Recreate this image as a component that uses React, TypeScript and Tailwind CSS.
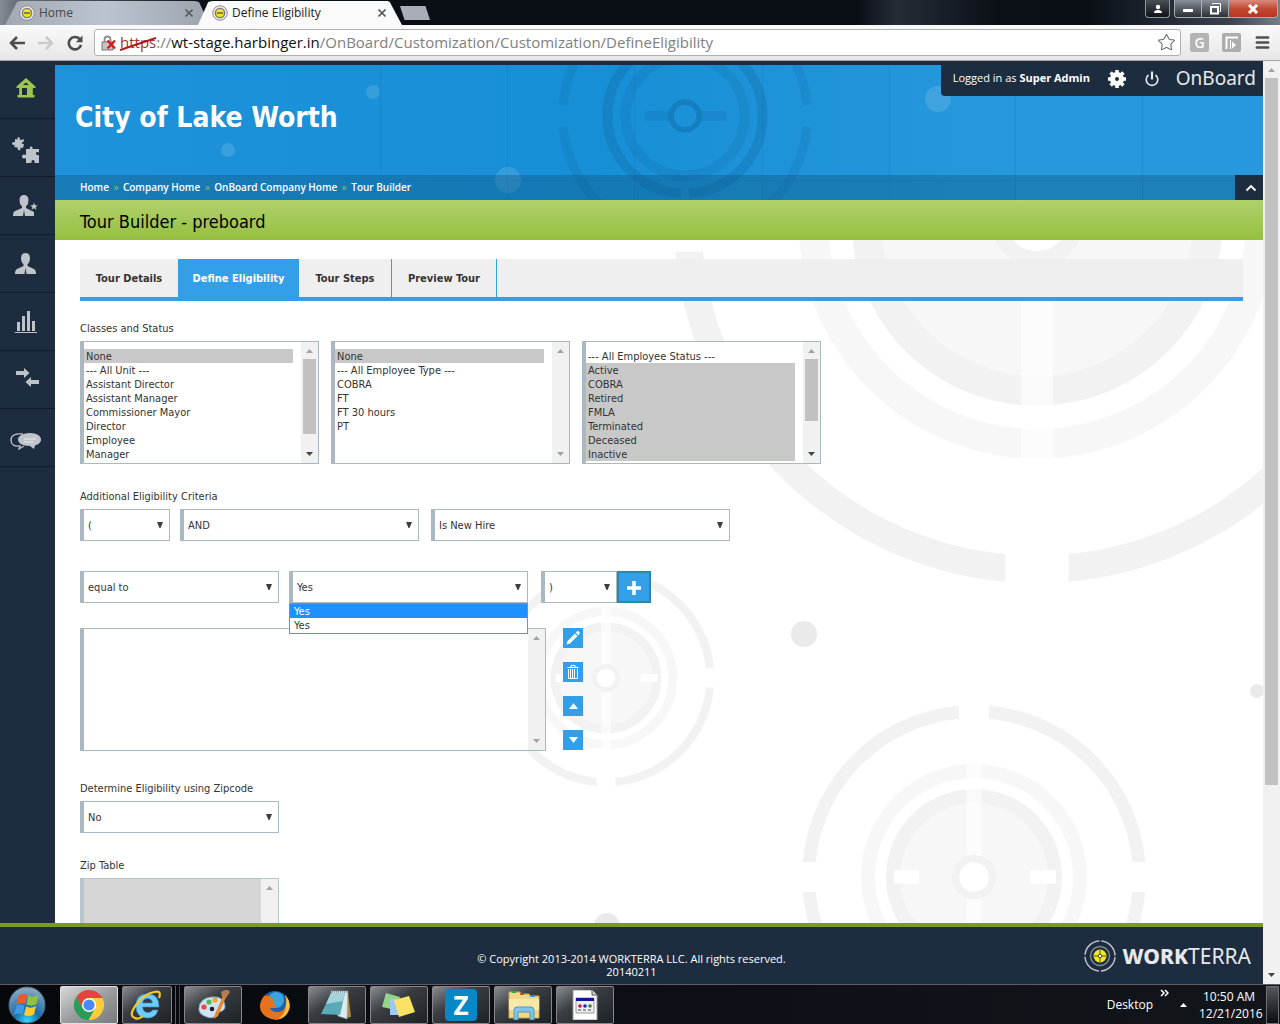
import { ReactNode } from 'react';
import { Menu, Star } from 'lucide-react';

const units = [
  'None',
  '--- All Unit ---',
  'Assistant Director',
  'Assistant Manager',
  'Commissioner Mayor',
  'Director',
  'Employee',
  'Manager',
];
const employeeTypes = ['None', '--- All Employee Type ---', 'COBRA', 'FT', 'FT 30 hours', 'PT'];
const statuses = [
  '--- All Employee Status ---',
  'Active',
  'COBRA',
  'Retired',
  'FMLA',
  'Terminated',
  'Deceased',
  'Inactive',
];

const breadcrumbs = ['Home', 'Company Home', 'OnBoard Company Home', 'Tour Builder'];

function Favicon() {
  return (
    <svg className="h-4 w-4 shrink-0" viewBox="0 0 16 16">
      <circle cx="8" cy="8" r="7.3" fill="#e8e8e8" stroke="#8d8d95" />
      <circle cx="8" cy="8" r="4.6" fill="#f4e21c" stroke="#77777c" strokeWidth="1.4" />
      <path d="M5 8h6" stroke="#5c5c70" strokeWidth="1.6" />
    </svg>
  );
}

function TabClose() {
  return (
    <button aria-label="Close tab" className="flex h-4 w-4 shrink-0 items-center justify-center">
      <svg className="h-2 w-2" viewBox="0 0 8 8" stroke="#5a5d60" strokeWidth="1.6">
        <path d="M.5.5l7 7M7.5.5l-7 7" />
      </svg>
    </button>
  );
}

function TabStrip() {
  return (
    <div className="flex h-[25px] shrink-0 items-start bg-[linear-gradient(90deg,#858b94_0,#6b727c_14px,#0a0f16_210px,#0a0f16_67%,#262c35_70%,#0b1017_78%,#0a0f16_85%,#1a2029_89%,#3a424c_96%,#76808a_100%)] font-['Open_Sans',sans-serif] text-xs">
      <div className="ml-[5px] flex h-full w-[200px] items-center gap-1 bg-gradient-to-r from-[#a3a8b0] via-[#bac4d0] to-[#9da4ae] pr-2 pl-[14px] text-[#45484c] [clip-path:polygon(0_100%,6%_8%,8%_4%,95%_4%,97%_8%,100%_60%,100%_100%)]">
        <Favicon />
        <span className="flex-1">Home</span>
        <TabClose />
      </div>
      <div className="-ml-[7px] flex h-full w-[204px] items-center gap-1 bg-[#fafafa] pr-[12px] pl-[14px] text-[#222] [clip-path:polygon(0_100%,5%_8%,7%_4%,93%_4%,94%_8%,100%_100%)]">
        <Favicon />
        <span className="flex-1">Define Eligibility</span>
        <TabClose />
      </div>
      <button
        aria-label="New tab"
        className="-ml-[2px] mt-[6px] h-[14px] w-[30px] bg-[#a9adb6] [clip-path:polygon(0_0,85%_0,100%_100%,15%_100%)]"
      />
      <div className="ml-auto flex gap-1 pr-[2px]">
        <button
          aria-label="Profile"
          className="flex h-[18px] w-[25px] items-center justify-center rounded-b border border-t-0 border-[#8f949b] bg-gradient-to-b from-[#4b5056] to-[#101418]"
        >
          <svg className="h-3 w-3" viewBox="0 0 12 12" fill="#fff">
            <circle cx="6" cy="4" r="2.2" />
            <path d="M2 10q0-3 4-3t4 3z" />
          </svg>
        </button>
        <div className="flex h-[18px] overflow-hidden rounded-b border border-t-0 border-[#a9adb3]">
          <button
            aria-label="Minimize"
            className="flex w-[27px] items-center justify-center border-r border-[#a9adb3] bg-gradient-to-b from-[#8a9097] to-[#2c3138]"
          >
            <span className="mt-1 h-[3px] w-[10px] bg-white" />
          </button>
          <button
            aria-label="Restore"
            className="flex w-[27px] items-center justify-center border-r border-[#a9adb3] bg-gradient-to-b from-[#8a9097] to-[#2c3138]"
          >
            <svg className="h-3 w-3" viewBox="0 0 12 12" fill="none" stroke="#fff">
              <path d="M3.500 1.500v-1h8v8h-1" />
              <path d="M2 4h7v6.500H2z" strokeWidth="2" />
            </svg>
          </button>
          <button
            aria-label="Close"
            className="flex w-[48px] items-center justify-center bg-gradient-to-b from-[#d98a7c] via-[#c24a34] to-[#b8351d]"
          >
            <svg className="h-[10px] w-3" viewBox="0 0 12 10" stroke="#fff" strokeWidth="3">
              <path d="M2 1l8 8M10 1L2 9" />
            </svg>
          </button>
        </div>
      </div>
    </div>
  );
}

function AddressBar() {
  return (
    <div className="flex h-9 shrink-0 items-center border-b border-[#a5a5a5] bg-gradient-to-b from-[#fafafa] to-[#e6e6e6] pr-[9px] pl-[9px]">
      <button aria-label="Back" className="mr-[13px]">
        <svg className="h-4 w-4" viewBox="0 0 16 16" fill="none" stroke="#4c4c4c" strokeWidth="2.6">
          <path d="M16 8H2.5M8 2L2 8l6 6" />
        </svg>
      </button>
      <button aria-label="Forward" className="mr-[13px]">
        <svg className="h-4 w-4" viewBox="0 0 16 16" fill="none" stroke="#cbcbcb" strokeWidth="2.6">
          <path d="M0 8h13.5M8 2l6 6-6 6" />
        </svg>
      </button>
      <button aria-label="Reload" className="mr-[11px]">
        <svg className="h-4 w-4" viewBox="0 0 16 16">
          <path d="M12.6 4A6.2 6.2 0 1 0 14 9.8" fill="none" stroke="#4c4c4c" strokeWidth="2.6" />
          <path d="M15.5.5v6.7H8.8z" fill="#4c4c4c" />
        </svg>
      </button>
      <div className="flex h-[27px] min-w-0 flex-1 items-center rounded-[3px] border border-[#b0b0b0] bg-white pr-[4px] pl-[6px]">
        <svg className="h-4 w-4 shrink-0" viewBox="0 0 16 16">
          <path d="M3.5 8V4.5a3 3 0 0 1 6 0V8" fill="none" stroke="#8c8c8c" strokeWidth="1.8" />
          <path d="M1 7h11v8H1z" fill="#c4c4c4" stroke="#777" />
          <path d="M6.500 5.500l7.500 8M14 5.500l-7.500 8" stroke="#d8171b" strokeWidth="2.2" />
        </svg>
        <div
          role="textbox"
          aria-label="Address"
          className="ml-[3px] flex-1 overflow-hidden font-['Open_Sans',sans-serif] text-[15px] whitespace-nowrap text-[#808080]"
        >
          <span className="relative text-[#a5352f]">
            https
            <svg className="absolute top-1 left-0 h-4 w-9" viewBox="0 0 36 16">
              <path d="M0 14L36 2" stroke="#b3141a" strokeWidth="2" />
            </svg>
          </span>
          ://<span className="text-[#111]">wt-stage.harbinger.in</span>
          /OnBoard/Customization/Customization/DefineEligibility
        </div>
        <Star size={19} strokeWidth={1.3} className="text-[#666]" />
      </div>
      <button
        aria-label="Translate extension"
        className="ml-[9px] h-[19px] w-[19px] rounded-xs bg-[#b4b4b4] font-['Open_Sans',sans-serif] text-sm leading-[19px] font-semibold text-white"
      >
        G
      </button>
      <button
        aria-label="Player extension"
        className="ml-[13px] flex h-[19px] w-[19px] items-center justify-center rounded-xs bg-[#adadad]"
      >
        <svg className="h-[15px] w-[15px]" viewBox="0 0 15 15">
          <path d="M2.500 14V2.500H14" fill="none" stroke="#fff" strokeWidth="2" />
          <path d="M6.500 5v9" stroke="#fff" />
          <path d="M8 6.500l4 3.500-4 3.500z" fill="#fff" />
        </svg>
      </button>
      <button aria-label="Menu" className="ml-[13px]">
        <Menu size={17} strokeWidth={3.4} className="text-[#505050]" />
      </button>
    </div>
  );
}

const navItems: { label: string; icon: ReactNode }[] = [
  {
    label: 'Home',
    icon: (
      <svg className="mb-1 h-[20px] w-[20px]" viewBox="0 0 20 20" fill="#9fc54d">
        <path
          fillRule="evenodd"
          d="M10 0L.5 8.500V10h2.700v7H1.500v2.500h17V17h-1.700v-7h2.700V8.500zM10 4.500l3 2.500H7zM6 10h5v7H6z"
        />
      </svg>
    ),
  },
  {
    label: 'Modules',
    icon: (
      <svg className="mt-1 h-[26px] w-[28px]" viewBox="0 0 28 26" fill="#bfc4ca">
        <path d="M3 2l2.500.5Q5 0 6.500 0T8 3l4-.8-.5 2.800Q9.500 5 9.500 6t2.500 1l-1 4-2.500-.5q.5 2.500-1 2.800-2 .2-2-2.800L2 10l1-2Q0 8.500 0 6.500T3 5z" />
        <path d="M14 12h4q-1-2.500 1-2.500T20.500 12H27v3.500q-3-1.200-3 1t3 1.500V26h-4.500q.5-3-1.500-3t-1.500 3H14v-5q-4 1.500-4-1.500t4-1.500z" />
      </svg>
    ),
  },
  {
    label: 'New hires',
    icon: (
      <svg className="h-[21px] w-[25px]" viewBox="0 0 25 21" fill="#bfc4ca">
        <path d="M11 0q4.500 0 4.500 5.500 0 4-2.500 6v1.500l8 4V21H12l-1-6-1 6H0q0-4 2-5l7-3v-1.500q-2.500-2-2.500-6Q6.500 0 11 0z" />
        <path d="M21 7l1.300 3 3 .2-2.300 2 .8 3L21 13.600 18.200 15.200l.8-3-2.300-2 3-.2z" stroke="#1d2d3f" strokeWidth=".6" />
      </svg>
    ),
  },
  {
    label: 'Employees',
    icon: (
      <svg className="h-[21px] w-[21px]" viewBox="0 0 21 21" fill="#bfc4ca">
        <path d="M10.500 0Q15 0 15 5.500q0 4-2.500 6v1.500l6.500 3q2 1 2 5h-9.500l-1-6-1 6H0q0-4 2-5l6.500-3v-1.500Q6 9.500 6 5.500 6 0 10.500 0z" />
      </svg>
    ),
  },
  {
    label: 'Reports',
    icon: (
      <svg className="h-[22px] w-[22px]" viewBox="0 0 22 22" fill="#bfc4ca">
        <path d="M2 11h3v9H2zM7 5h3v15H7zM12 0h3v20h-3zM17 10h3v10h-3zM0 21h22v1H0z" />
      </svg>
    ),
  },
  {
    label: 'Transfers',
    icon: (
      <svg className="ml-1 mb-1 h-[19px] w-[23px]" viewBox="0 0 23 19" fill="#bfc4ca">
        <path d="M0 3h8V0l5.500 5L8 10V7H0zM23 12h-8V9l-5.500 5 5.500 5v-3h8z" />
      </svg>
    ),
  },
  {
    label: 'Messages',
    icon: (
      <svg className="mt-2 h-[17px] w-[31px]" viewBox="0 0 31 17">
        <path d="M13 1Q1 0 1 7t9 6l-1 3 5-3" fill="none" stroke="#bfc4ca" strokeWidth="1.300" />
        <path d="M20 0c7 0 11 3 11 6.500 0 3-2.500 5-6 6l-1 3.500-4-3q-12 0-12-6.500C8 3 13 0 20 0z" fill="#bfc4ca" />
        <path d="M14 6h12M14 9h9" stroke="#e9ebed" />
      </svg>
    ),
  },
];

function Sidebar() {
  return (
    <nav className="w-[55px] shrink-0 bg-[#1d2d3f]">
      {navItems.map((item) => (
        <a
          key={item.label}
          href="#"
          aria-label={item.label}
          className="flex h-[58px] items-center justify-center border-b border-[#111c2b] pr-1"
        >
          {item.icon}
        </a>
      ))}
    </nav>
  );
}

// Crosshair watermark, drawn around its own centre
function Target({ x, y, scale }: { x: number; y: number; scale: number }) {
  return (
    <g transform={`translate(${x} ${y}) scale(${scale})`}>
      <circle r="165.500" fill="none" stroke="#f2f2f2" strokeWidth="13" />
      <path d="M-15-175h30v350h-30zM-175-15h350v30h-350z" fill="#fff" />
      <circle r="106" fill="none" stroke="#f7f7f7" strokeWidth="14" />
      <circle r="88" fill="#f2f2f2" />
      <circle r="74" fill="#f7f7f7" />
      <path d="M-7.500-113h15v226h-15z" fill="#fff" fillOpacity=".6" />
      <path d="M-80-6.500h25v13h-25zM56-6.500h26v13H56z" fill="#fff" />
      <circle r="18.500" fill="#fff" stroke="#f2f2f2" strokeWidth="7.500" />
    </g>
  );
}

function Watermark() {
  return (
    <svg className="pointer-events-none absolute inset-0 h-full w-full" aria-hidden="true">
      <Target x={982} y={-20} scale={2.11} />
      <Target x={919} y={637} scale={1} />
      <Target x={551} y={438} scale={0.63} />
      <g fill="#eaeaea">
        <circle cx="749" cy="394" r="13" />
        <circle cx="552" cy="686" r="13" />
        <circle cx="1202" cy="451" r="7" />
      </g>
    </svg>
  );
}

function HeaderArt() {
  return (
    <svg className="absolute inset-0 h-full w-full" aria-hidden="true">
      <g transform="translate(630 51)" fill="none" stroke="#0b5f96" strokeOpacity=".25">
        <path d="M-122-11A122.500 122.500 0 0 1 122-11M-122 11A122.500 122.500 0 0 0 122 11" strokeWidth="9" strokeOpacity=".16" />
        <path d="M-4-77.400A77.500 77.500 0 0 0-4 77.400M4-77.400A77.500 77.500 0 0 1 4 77.400" strokeWidth="10" />
        <circle r="59.500" strokeWidth="10" strokeOpacity=".15" />
        <path d="M-40 0h24M16 0h26" strokeWidth="10" strokeOpacity=".16" />
        <circle r="14" strokeWidth="5.500" strokeOpacity=".36" />
      </g>
      <g stroke="#0a6cab" strokeOpacity=".25">
        <path d="M325.500 0v135M452.500 0v135M579.500 0v135M707.500 0v135M834.500 0v135M960.500 0v135M1087.500 0v135M326 115.500h900" />
      </g>
      <g fill="#fff" fillOpacity=".13">
        <circle cx="318" cy="27" r="7" />
        <circle cx="173" cy="85" r="7" />
        <circle cx="453" cy="115" r="13" />
        <circle cx="883" cy="34" r="13" />
      </g>
    </svg>
  );
}

function Header() {
  return (
    <header className="relative bg-[#1d2d3f] pt-1">
      <div className="relative bg-gradient-to-r from-[#1e92da] via-[#178fd6] via-45% to-[#2798dc] to-80%">
        <HeaderArt />
        <h1 className="relative flex h-[110px] items-center pb-1 pl-5 text-[28px] font-bold text-white">
          City of Lake Worth
        </h1>
        <div className="relative flex h-[25px] items-center bg-[#0f5078]/35 pl-[25px] text-[10px]">
          <nav className="flex flex-1 font-['Open_Sans',sans-serif] font-semibold text-white">
            {breadcrumbs.map((crumb, i) => (
              <span key={crumb} className="flex">
                <a href="#">{crumb}</a>
                {i < breadcrumbs.length - 1 && (
                  <span className="w-[14px] text-center font-normal text-[#8cc152]">»</span>
                )}
              </span>
            ))}
          </nav>
          <button aria-label="Collapse header" className="flex h-[25px] w-7 items-center justify-center bg-[#1d2d3f]">
            <svg className="ml-1 h-2 w-3" viewBox="0 0 12 8" fill="none" stroke="#fff" strokeWidth="1.800">
              <path d="M1.500 6.500L6 2l4.500 4.500" />
            </svg>
          </button>
        </div>
      </div>
      <div className="absolute top-0 right-0 flex h-[35px] items-center rounded-bl bg-[#1d2d3f] pr-[7px] pl-3 text-white">
        <span className="w-[135px] font-['Open_Sans',sans-serif] text-[11px] whitespace-nowrap">
          Logged in as <b>Super Admin</b>
        </span>
        <button aria-label="Settings" className="ml-5">
          <svg className="h-[18px] w-[18px]" viewBox="-9 -9 18 18">
            <circle r="4.500" fill="none" stroke="#fff" strokeWidth="5" />
            <path
              d="M0-9v4M0 9V5M-9 0h4M9 0H5M-6.400-6.400l3 3M6.400 6.400l-3-3M-6.400 6.400l3-3M6.400-6.400l-3 3"
              stroke="#fff"
              strokeWidth="3.600"
            />
          </svg>
        </button>
        <button aria-label="Log out" className="ml-[18px]">
          <svg className="h-4 w-4" viewBox="0 0 16 16" fill="none" stroke="#e6e9ec">
            <path d="M4.500 4a5.800 5.800 0 1 0 7 0" strokeWidth="1.600" />
            <path d="M8 .5v8" strokeWidth="2.200" />
          </svg>
        </button>
        <span className="ml-4 font-['Noto_Sans',sans-serif] text-[19px] text-[#e6e9ec]">OnBoard</span>
      </div>
    </header>
  );
}

function ScrollArrow({ down = false, dim = false }: { down?: boolean; dim?: boolean }) {
  return (
    <svg className={`h-1 w-[7px] shrink-0 ${dim ? 'text-[#a3a3a3]' : 'text-[#444]'}`} viewBox="0 0 7 4" fill="currentColor">
      <path d={down ? 'M0 0h7L3.500 4z' : 'M0 4h7L3.500 0z'} />
    </svg>
  );
}

function ListScrollbar({ thumb = '' }: { thumb?: string }) {
  return (
    <div className="flex w-[17px] shrink-0 flex-col items-center bg-[#f1f1f1] pt-[7px] pb-[7px]">
      <ScrollArrow dim />
      {thumb && <div className={`mt-[6px] w-[13px] bg-[#c1c1c1] ${thumb}`} />}
      <div className="flex-1" />
      <ScrollArrow down dim={!thumb} />
    </div>
  );
}

interface ListBoxProps {
  label: string;
  options: string[];
  selected: string[];
  thumb?: string;
}

function ListBox({ label, options, selected, thumb }: ListBoxProps) {
  return (
    <div className="flex h-[123px] w-[239px] border border-l-4 border-[#aab8c2] bg-white">
      <select
        multiple
        aria-label={label}
        defaultValue={selected}
        className="mr-2 h-full min-w-0 flex-1 appearance-none overflow-hidden bg-white pt-[7px] text-[#333] outline-none"
      >
        {options.map((option) => (
          <option key={option} className="h-[14px] min-h-0 px-[2px] pt-px pb-0 leading-[14px] checked:bg-[#c8c8c8] checked:text-[#333]">
            {option}
          </option>
        ))}
      </select>
      <ListScrollbar thumb={thumb} />
    </div>
  );
}

interface DropDownProps {
  id?: string;
  label?: string;
  value: string;
  width: string;
}

function DropDown({ id, label, value, width }: DropDownProps) {
  return (
    <div className={`relative h-8 ${width}`}>
      <select
        id={id}
        aria-label={label}
        defaultValue={value}
        className="h-full w-full appearance-none border border-l-4 border-[#aab8c2] bg-white pt-[2px] pl-1 text-[#333] outline-none"
      >
        <option>{value}</option>
      </select>
      <svg className="pointer-events-none absolute top-[13px] right-[7px] h-[6px] w-[6px]" viewBox="0 0 6 6" fill="#3d3d3d">
        <path d="M0 0h6L3.500 6h-1z" />
      </svg>
    </div>
  );
}

function Tabs() {
  return (
    <nav className="flex h-[42px] border-b-4 border-[#329fe8] bg-[#efefef] text-[11px] leading-[39px] font-bold text-[#333]">
      <a href="#" className="w-[98px] text-center">Tour Details</a>
      <a href="#" className="w-[121px] bg-[#329fe8] text-center text-white">Define Eligibility</a>
      <a href="#" className="w-[93px] border-r border-[#329fe8] text-center">Tour Steps</a>
      <a href="#" className="w-[105px] border-r border-[#329fe8] text-center">Preview Tour</a>
    </nav>
  );
}

function SquareButton({ label, children }: { label: string; children: ReactNode }) {
  return (
    <button type="button" aria-label={label} className="flex h-5 w-5 items-center justify-center bg-[#329fe8]">
      {children}
    </button>
  );
}

function EligibilityForm() {
  return (
    <form className="relative px-[25px] pt-[19px] text-[11px] leading-4 text-[#333]">
      <div className="-mr-[5px]">
        <Tabs />
      </div>

      <p className="mt-5 mb-1">Classes and Status</p>
      <div className="flex gap-3">
        <ListBox label="Unit" options={units} selected={['None']} thumb="h-[75px]" />
        <ListBox label="Employee type" options={employeeTypes} selected={['None']} />
        <ListBox label="Employee status" options={statuses} selected={statuses.slice(1)} thumb="h-[62px]" />
      </div>

      <p className="mt-[25px] mb-1">Additional Eligibility Criteria</p>
      <div className="flex">
        <DropDown label="Opening bracket" value="(" width="w-[90px] mr-[10px]" />
        <DropDown label="Operator" value="AND" width="w-[239px] mr-3" />
        <DropDown label="Field" value="Is New Hire" width="w-[299px]" />
      </div>
      <div className="mt-[30px] flex">
        <DropDown label="Comparison" value="equal to" width="w-[199px] mr-[10px]" />
        <div className="relative mr-[13px]">
          <DropDown label="Value" value="Yes" width="w-[239px]" />
          <ul className="absolute top-8 left-0 z-10 w-full border border-[#6f8fc9] bg-white leading-[15px]">
            <li className="h-[14px] bg-[#1e90ff] pl-1 text-white">Yes</li>
            <li className="h-[15px] pl-1">Yes</li>
          </ul>
        </div>
        <DropDown label="Closing bracket" value=")" width="w-[76px]" />
        <button
          type="button"
          aria-label="Add criteria"
          className="flex h-8 w-[34px] items-center justify-center border-2 border-[#2c86ad] bg-[#329fe8]"
        >
          <svg className="mt-[2px] h-[14px] w-[14px]" viewBox="0 0 14 14" stroke="#fff" strokeWidth="3.500">
            <path d="M7 0v14M0 7h14" />
          </svg>
        </button>
      </div>

      <div className="mt-[25px] flex gap-[17px]">
        <div className="flex h-[123px] w-[466px] border border-l-4 border-[#aab8c2] bg-white">
          <select multiple aria-label="Criteria" className="h-full flex-1 appearance-none overflow-hidden outline-none" />
          <ListScrollbar />
        </div>
        <div className="flex flex-col gap-[14px]">
          <SquareButton label="Edit">
            <svg className="h-[14px] w-[14px]" viewBox="0 0 14 14" fill="#fff">
              <path d="M.500 13.500l1-3.500L9 2.500 11.500 5 4 12.500zM9.800 1.700l1.400-1.400q.8-.6 1.900.4t.4 2L12.200 4.200z" />
            </svg>
          </SquareButton>
          <SquareButton label="Delete">
            <svg className="h-[14px] w-[12px]" viewBox="0 0 12 14" fill="none" stroke="#fff">
              <path d="M.5 2.500h11M4 2V.5h4V2M1.500 4v9.500h9V4M3.500 4v9M5.500 4v9M7.500 4v9" />
            </svg>
          </SquareButton>
          <SquareButton label="Move up">
            <svg className="h-[6px] w-[9px]" viewBox="0 0 9 6" fill="#fff">
              <path d="M0 6h9L4.500 0z" />
            </svg>
          </SquareButton>
          <SquareButton label="Move down">
            <svg className="h-[6px] w-[9px]" viewBox="0 0 9 6" fill="#fff">
              <path d="M0 0h9L4.500 6z" />
            </svg>
          </SquareButton>
        </div>
      </div>

      <label htmlFor="zipcode" className="mt-[30px] mb-1 block">
        Determine Eligibility using Zipcode
      </label>
      <DropDown id="zipcode" value="No" width="w-[199px]" />

      <label htmlFor="zip-table" className="mt-[25px] mb-1 block">
        Zip Table
      </label>
      <div className="flex h-[123px] w-[199px] border border-l-4 border-[#bac6ce]">
        <select
          id="zip-table"
          multiple
          disabled
          className="h-full min-w-0 flex-1 appearance-none overflow-hidden bg-[#d6d6d6] outline-none"
        />
        <ListScrollbar />
      </div>
    </form>
  );
}

function Footer() {
  return (
    <footer className="grid h-[61px] shrink-0 grid-cols-[1fr_auto_1fr] items-center border-t-4 border-[#7a992c] bg-[#1d2d3f] text-white">
      <div />
      <p className="pt-[18px] text-center font-['Open_Sans',sans-serif] text-[11px] leading-[13px]">
        © Copyright 2013-2014 WORKTERRA LLC. All rights reserved.
        <br />
        20140211
      </p>
      <div className="flex items-center justify-end gap-[6px] pr-3">
        <svg className="h-8 w-8" viewBox="-16 -16 32 32" fill="none">
          <circle r="15" stroke="#b9bec5" strokeWidth="1.500" strokeDasharray="21.560 2" strokeDashoffset="-1" />
          <circle r="9.500" stroke="#7d8792" strokeWidth="1.500" />
          <circle r="6.500" fill="#f6e81e" />
          <path d="M-6 0H6M0-6V6" stroke="#55502a" />
          <circle r="1.800" fill="#fff" stroke="#55502a" />
        </svg>
        <span className="pt-[2px] font-['Noto_Sans',sans-serif] text-[21px] text-[#e6e9ec]">
          <b className="font-extrabold">WORK</b>TERRA
        </span>
      </div>
    </footer>
  );
}

function PageScrollbar() {
  return (
    <div className="flex w-[17px] shrink-0 flex-col items-center bg-[#f1f1f1] pt-[7px] pb-[7px]">
      <ScrollArrow dim />
      <div className="mt-[6px] w-[13px] flex-[705] bg-[#c1c1c1]" />
      <div className="flex-[187]" />
      <ScrollArrow down />
    </div>
  );
}

const taskIcon = 'h-[30px] w-[34px]';

function TaskButton({ label, active, children }: { label: string; active?: boolean; children: ReactNode }) {
  return (
    <button
      aria-label={label}
      className={`flex h-[38px] w-[58px] items-center justify-center rounded-xs border ${
        active
          ? 'border-[#e2e2e2] bg-gradient-to-br from-[#d9d9d9] via-[#9b9d9f] to-[#77797c]'
          : 'border-[#85878b] bg-gradient-to-br from-[#8b8d90] via-[#3a3e43] via-40% to-[#1d2227]'
      }`}
    >
      {children}
    </button>
  );
}

function Taskbar() {
  return (
    <div className="flex h-10 shrink-0 items-center border-t border-[#5d5f68] bg-gradient-to-r from-[#06080c] via-[#0c1016] to-[#12161b] font-['Open_Sans',sans-serif] text-xs text-white">
      <button aria-label="Start" className="mr-[14px] ml-2">
        <svg className="h-[38px] w-[38px]" viewBox="-19 -19 38 38">
          <defs>
            <radialGradient id="orb" cy=".95" r=".9">
              <stop offset="0" stopColor="#2fd8ff" />
              <stop offset=".4" stopColor="#176cab" />
              <stop offset="1" stopColor="#8ba7bf" />
            </radialGradient>
          </defs>
          <circle r="18" fill="url(#orb)" stroke="#4b6a82" />
          <path d="M-8.500-9q4-3.500 8.500-1l-2 9q-4-2.500-8.500 1z" fill="#ec5a2b" />
          <path d="M1.500-9.500q4.500 2.500 10-.5L9.500-1q-5 3-10 .5z" fill="#8cc63e" />
          <path d="M-11 1.500q4-3 8.500-.5l-2 8.500q-4-2.500-8.500 1z" fill="#3f9ae0" />
          <path d="M-1 1.500q4.500 2.500 10-.5L7 9.500q-5 3-10 .5z" fill="#fdc92b" />
        </svg>
      </button>
      <div className="flex gap-1">
        <TaskButton label="Google Chrome" active>
          <svg className={taskIcon} viewBox="-17 -15 34 30">
            <circle r="8" fill="#fff" />
            <path d="M0-7H13.270A15 15 0 0 0-12.700-8L-6.060 3.500A7 7 0 0 1 0-7z" fill="#e2463a" />
            <path d="M0-7H13.270A15 15 0 0 0-12.700-8L-6.060 3.500A7 7 0 0 1 0-7z" fill="#fccd38" transform="rotate(120)" />
            <path d="M0-7H13.270A15 15 0 0 0-12.700-8L-6.060 3.500A7 7 0 0 1 0-7z" fill="#2b9c56" transform="rotate(240)" />
            <circle r="5.600" fill="#4a8af4" />
          </svg>
        </TaskButton>
        <div className="flex w-[58px] gap-[2px] [&>button]:w-[50px]">
          <TaskButton label="Internet Explorer">
            <svg className={taskIcon} viewBox="0 0 34 30">
              <path
                d="M29 17H12.500q.5 5.500 5.500 5.500 3.500 0 4.500-2.500H28q-2 8-10.500 8Q6 28 6 16T17.500 4Q29 4 29 17zM12.500 13h10q-.5-4.500-5-4.500t-5 4.500z"
                fill="#6fcdf8"
                stroke="#2a93dd"
                strokeWidth=".7"
              />
              <path d="M29 8q3-8-5-6Q14 4 6 15T5 28q3 2 8-2" fill="none" stroke="#f7c62a" strokeWidth="2.200" />
            </svg>
          </TaskButton>
          <span className="h-[38px] w-[2px] border-r border-[#5a5d62]" />
          <span className="h-[38px] w-[2px] border-r border-[#44474c]" />
        </div>
        <TaskButton label="Paint">
          <svg className={taskIcon} viewBox="0 0 34 30">
            <path d="M3 18Q4 8 16 7t13 9q0 5-6 6-4 1-4 4-2 3-8 1Q2 24 3 18z" fill="#cfe4f3" stroke="#86abc6" />
            <circle cx="8" cy="17" r="2.600" fill="#e5473c" />
            <circle cx="13" cy="12" r="2.600" fill="#51b84c" />
            <circle cx="19" cy="10" r="2.600" fill="#f0a22f" />
            <circle cx="16" cy="19" r="2.300" fill="#1b2026" />
            <path d="M27 6l3 1-8 19-4 3 1-5z" fill="#e98a2f" />
            <path d="M25 2l6-3 3 3-4 6-4-1z" fill="#b57c4c" />
          </svg>
        </TaskButton>
        <button aria-label="Firefox" className="flex h-[38px] w-[58px] items-center justify-center">
          <svg className={taskIcon} viewBox="-17 -15 34 30">
            <circle r="14" fill="#1c5fae" />
            <circle cx="1" cy="-5" r="8" fill="#3ba4dc" />
            <path d="M-11-9q-6 8-3 15T1 15q10-1 13.500-11Q16-4 10-10q2 5 1 8-1 10-10 9-5-1-6-4 3 1 6-1 1-2-3-3 2-4 1-5-4 0-5-3-4-1-5-0z" fill="#e8711c" />
            <path d="M10-10q5 5 4.500 12Q12 13 3 14 12 8 11-2q1-4-1-8z" fill="#fbc63c" />
          </svg>
        </button>
        <TaskButton label="Notepad">
          <svg className={taskIcon} viewBox="0 0 34 30">
            <path d="M28 3l3 24-5 1z" fill="#b08a3e" />
            <path d="M11 1h17l-1 28-9-3z" fill="#dce9ee" stroke="#94a8b0" strokeWidth=".6" />
            <path d="M11 3h14l-5 22-19-1z" fill="#5aa9b8" />
            <path d="M11 3h14l-2 8-17 3z" fill="#a2d3da" />
            <path d="M12 2h15" stroke="#555" strokeDasharray="1 1" />
          </svg>
        </TaskButton>
        <TaskButton label="Sticky Notes">
          <svg className={taskIcon} viewBox="0 0 34 30">
            <path d="M4 3l14 4-4 13-14-3z" fill="#94d58a" />
            <path d="M8 9h14v16H8z" fill="#9cc9f3" />
            <path d="M12 10l15-4 6 16-16 5z" fill="#fbe262" />
          </svg>
        </TaskButton>
        <TaskButton label="Zimbra">
          <span className="flex h-8 w-8 items-center justify-center rounded bg-[#0787c6] font-['Open_Sans',sans-serif] text-[26px] leading-none font-bold text-white">
            Z
          </span>
        </TaskButton>
        <TaskButton label="Windows Explorer">
          <svg className={taskIcon} viewBox="0 0 34 30">
            <path d="M3 2h11l1 2h8l1 2h9v22H3z" fill="#efd887" stroke="#c9a953" />
            <path d="M6 2h4" stroke="#2ea84a" strokeWidth="2" />
            <path d="M14 4h4" stroke="#d9432f" strokeWidth="2" />
            <path d="M24 6h5" stroke="#3a8dd8" strokeWidth="2" />
            <path d="M3 9h30v11H3z" fill="#f7e7a8" />
            <path d="M8 30V20q0-3 3-3h14q3 0 3 3v10h-4v-8H12v8z" fill="#82c4e6" stroke="#4b9ac8" />
          </svg>
        </TaskButton>
        <TaskButton label="Batch file">
          <svg className={taskIcon} viewBox="0 0 34 30">
            <path d="M5 0h19l5 5v25H5z" fill="#fff" stroke="#999" />
            <path d="M24 0v5h5" fill="#d5d5d5" stroke="#555" />
            <path d="M8 8h18v15H8z" fill="#eee" stroke="#999" />
            <path d="M8 8h18v3H8z" fill="#14149a" />
            <circle cx="12" cy="16" r="1.800" fill="#c21d2c" />
            <circle cx="17" cy="16" r="1.800" fill="#2424ac" />
            <circle cx="22" cy="16" r="1.800" fill="#248b3b" />
            <path d="M10 20h14" stroke="#444" strokeDasharray="3 2" />
          </svg>
        </TaskButton>
      </div>
      <span className="ml-auto">Desktop</span>
      <button aria-label="More toolbars" className="mt-1 ml-[7px] self-start">
        <svg className="h-2 w-[9px]" viewBox="0 0 9 8" fill="none" stroke="#fff" strokeWidth="1.500">
          <path d="M1 1l3 3-3 3M5 1l3 3-3 3" />
        </svg>
      </button>
      <button aria-label="Show hidden icons" className="ml-[11px]">
        <svg className="h-1 w-[7px]" viewBox="0 0 7 4" fill="#fff">
          <path d="M0 4h7L3.500 0z" />
        </svg>
      </button>
      <div className="ml-3 w-[60px] text-center leading-[17px] whitespace-nowrap">
        10:50 AM
        <br />
        12/21/2016
      </div>
      <button
        aria-label="Show desktop"
        className="mr-px ml-[7px] h-[38px] w-[13px] border border-[#6c6f74] bg-gradient-to-b from-[#55585d] to-[#0b0e12]"
      />
    </div>
  );
}

function App() {
  return (
    <div className="flex h-screen flex-col overflow-hidden bg-white font-['DejaVu_Sans_Condensed','DejaVu_Sans',sans-serif]">
      <TabStrip />
      <AddressBar />
      <div className="flex min-h-0 flex-1">
        <div className="flex min-w-0 flex-1 flex-col">
          <div className="flex min-h-0 flex-1">
            <Sidebar />
            <div className="flex min-w-0 flex-1 flex-col">
              <Header />
              <h2 className="flex h-10 shrink-0 items-center bg-gradient-to-b from-[#b0d06b] to-[#96c03f] pt-[2px] pl-[25px] text-[18px] text-black">
                Tour Builder - preboard
              </h2>
              <main className="relative min-h-0 flex-1 overflow-hidden">
                <Watermark />
                <EligibilityForm />
              </main>
            </div>
          </div>
          <Footer />
        </div>
        <PageScrollbar />
      </div>
      <Taskbar />
    </div>
  );
}

export default App;
